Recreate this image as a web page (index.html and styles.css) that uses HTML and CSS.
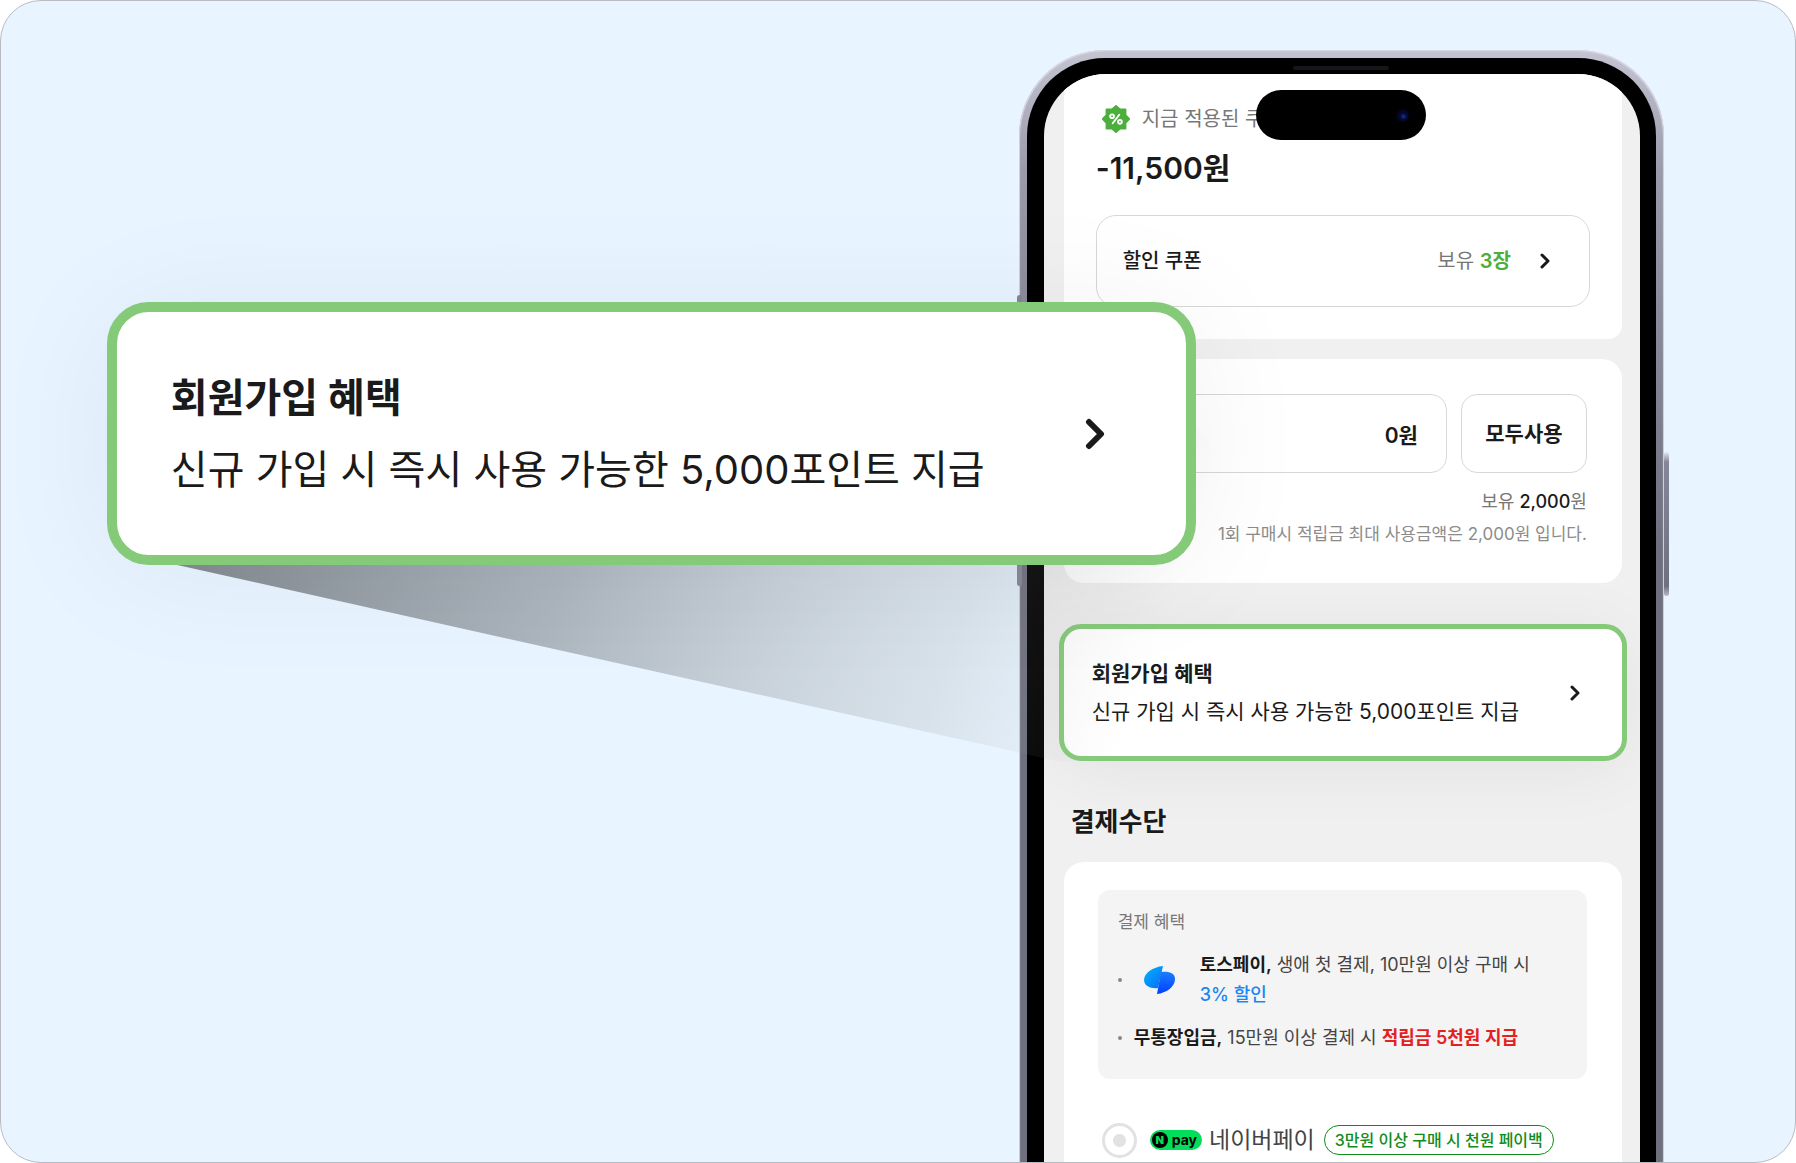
FILE: index.html
```html
<!DOCTYPE html>
<html lang="ko">
  <head>
    <meta charset="UTF-8" />
    <meta name="viewport" content="width=device-width, initial-scale=1.0" />
    <title>회원가입 혜택</title>
    <link rel="stylesheet" href="styles.css">
  </head>
  <body>
    <main class="banner">
      <div class="phone">
        <span class="side-button side-button-left"></span>
        <span class="side-button side-button-right"></span>
        <div class="bezel">
          <span class="speaker"></span>
          <div class="island"><span class="camera"></span></div>
          <div class="screen">
            <section class="card card-coupon">
              <div class="applied">
                <svg class="badge" viewBox="0 0 32 32" aria-hidden="true">
                  <path fill="#4caf3c" stroke="#4caf3c" stroke-width="2" stroke-linejoin="round" d="M16 2l4.200 3.900h5.900v5.900L30 16l-3.900 4.200v5.900h-5.900L16 30l-4.200-3.900H5.900v-5.900L2 16l3.900-4.200V5.900h5.900z" />
                  <g fill="none" stroke="#fff" stroke-width="2" stroke-linecap="round">
                    <path d="M19.500 11.500l-7 9" />
                    <circle cx="11.800" cy="13" r="2" />
                    <circle cx="20.200" cy="19" r="2" />
                  </g>
                </svg>
                <span>지금 적용된 쿠폰</span>
              </div>
              <strong class="amount">-11,500원</strong>
              <button type="button" class="coupon-row">
                <span>할인 쿠폰</span>
                <span class="coupon-count">보유 <b>3장</b></span>
                <svg class="chevron" viewBox="0 0 10 16" aria-hidden="true"><path d="M2 2l6 6-6 6" /></svg>
              </button>
            </section>

            <section class="card card-points">
              <div class="points-row">
                <input type="text" class="points-input" value="0원" aria-label="적립금" />
                <button type="button" class="use-all">모두사용</button>
              </div>
              <p class="points-held">보유 <b>2,000</b>원</p>
              <p class="points-note">1회 구매시 적립금 최대 사용금액은 2,000원 입니다.</p>
            </section>

            <a href="#" class="join">
              <span class="join-text"><b>회원가입 혜택</b><span>신규 가입 시 즉시 사용 가능한 5,000포인트 지급</span></span>
              <svg class="chevron" viewBox="0 0 10 16" aria-hidden="true"><path d="M2 2l6 6-6 6" /></svg>
            </a>

            <h2 class="pay-title">결제수단</h2>
            <section class="card card-pay">
              <div class="benefits">
                <h3>결제 혜택</h3>
                <ul>
                  <li>
                    <svg class="toss" viewBox="0 0 32 28" aria-hidden="true">
                      <defs>
                        <linearGradient id="tossLeft" x1="0" y1="0" x2="1" y2="1">
                          <stop offset="0" stop-color="#00b4ff" />
                          <stop offset="1" stop-color="#0a6cf5" />
                        </linearGradient>
                        <linearGradient id="tossRight" x1="0" y1="0" x2="0" y2="1">
                          <stop offset="0" stop-color="#1c7dff" />
                          <stop offset="1" stop-color="#0040ff" />
                        </linearGradient>
                      </defs>
                      <path fill="url(#tossLeft)" d="M19 0C9 1 0 7 0 14c0 6 7 9 14 8z" />
                      <path fill="url(#tossRight)" d="M17 6c8-1 14 1 14 7 0 8-9 14-18 15z" />
                    </svg>
                    <span class="benefit-text"><b>토스페이,</b> 생애 첫 결제, 10만원 이상 구매 시 <em class="blue">3% 할인</em></span>
                  </li>
                  <li><span class="benefit-text"><b>무통장입금,</b> 15만원 이상 결제 시 <em class="red">적립금 5천원 지급</em></span></li>
                </ul>
              </div>
              <label class="pay-option">
                <input type="radio" name="pay" />
                <span class="npay"><i>N</i>pay</span>
                <span class="pay-name">네이버페이</span>
                <span class="payback">3만원 이상 구매 시 천원 페이백</span>
              </label>
            </section>
          </div>
        </div>
      </div>

      <!-- shade between the large box and the card on the phone -->
      <svg class="beam" viewBox="0 0 1796 1163" preserveAspectRatio="none" aria-hidden="true">
        <defs>
          <linearGradient id="beamFill" gradientUnits="userSpaceOnUse" x1="176" y1="500" x2="1106" y2="807">
            <stop offset="0" stop-color="#000" stop-opacity="0.45" />
            <stop offset="0.4" stop-color="#202428" stop-opacity="0.3" />
            <stop offset="0.8" stop-color="#909090" stop-opacity="0.18" />
            <stop offset="1" stop-color="#b0b0b0" stop-opacity="0" />
          </linearGradient>
        </defs>
        <path fill="url(#beamFill)" d="M172 564L1060 762H1500L1190 420z" />
      </svg>

      <a href="#" class="callout">
        <span class="callout-text"><b>회원가입 혜택</b><span>신규 가입 시 즉시 사용 가능한 5,000포인트 지급</span></span>
        <svg class="chevron chevron-large" viewBox="0 0 10 16" aria-hidden="true"><path d="M2 2l6 6-6 6" /></svg>
      </a>
    </main>
  </body>
</html>
```
FILE: styles.css
```css
* {
  box-sizing: border-box;
}
body {
  margin: 0;
  background-color: #fff;
  color: #1a1a1a;
  font-family: Inter, "Noto Sans CJK KR", sans-serif;
  font-size: 18px;
  line-height: 30px;
}
h2,
h3,
p,
ul {
  margin: 0;
  padding: 0;
}
a {
  color: inherit;
  text-decoration: none;
}
button,
input {
  font: inherit;
  color: inherit;
}
b,
strong {
  font-weight: 600;
}
.banner {
  position: relative;
  display: flex;
  justify-content: flex-end;
  min-height: 100vh;
  padding: 49px 7.3% 0 0;
  border: 1px solid #b8bcc2;
  border-radius: 41px;
  background-color: #e8f4ff;
  overflow: hidden;
}

/* phone */
.phone {
  position: relative;
  display: flex;
  width: 38.8%;
  padding: 8px 8px 0;
  border-radius: 86px 86px 0 0;
  background: linear-gradient(#c4c4d2, #9a9aab 120px, #6f707f 500px);
  box-shadow: inset 1px 1px 1px #d8d8e2, inset -1px 1px 1px #d8d8e2;
}
.side-button {
  position: absolute;
  width: 5px;
  border-radius: 3px;
  background-color: #85869a;
}
.side-button-left {
  left: -2px;
  top: 245px;
  height: 291px;
}
.side-button-right {
  right: -5px;
  top: 402px;
  height: 144px;
  background: linear-gradient(#e6e8f2, #85869a 10px, #6f707f 134px, #b8bac6);
}
.bezel {
  position: relative;
  flex: 1;
  display: flex;
  min-width: 0;
  padding: 16px 16px 0 17px;
  border-radius: 78px 78px 0 0;
  background-color: #000;
}
.speaker {
  position: absolute;
  top: 8px;
  left: 50%;
  width: 96px;
  height: 4px;
  margin-left: -48px;
  border-radius: 2px;
  background-color: #15151a;
}
.island {
  position: absolute;
  top: 32px;
  left: 50%;
  width: 170px;
  height: 50px;
  margin-left: -85px;
  border-radius: 25px;
  background-color: #000;
}
.camera {
  position: absolute;
  top: 18px;
  right: 17px;
  width: 14px;
  height: 14px;
  border-radius: 50%;
  background: radial-gradient(circle at 60% 60%, #103a9a, #060a3c 25%, #000 70%);
}
.screen {
  flex: 1;
  display: flex;
  flex-direction: column;
  min-width: 0;
  padding: 0 18px 0 20px;
  border-radius: 62px 62px 0 0;
  background-color: #f0f0f0;
  overflow: hidden;
}
.card {
  padding: 0 35px 0 34px;
  border-radius: 20px;
  background-color: #fff;
}
.chevron {
  flex: none;
  width: 10px;
  height: 16px;
  fill: none;
  stroke: #1a1a1a;
  stroke-width: 3;
  stroke-linecap: round;
  stroke-linejoin: round;
}

/* coupon */
.card-coupon {
  padding: 30px 32px 32px;
  border-radius: 0 0 14px 14px;
}
.applied {
  display: flex;
  align-items: center;
  gap: 10px;
  padding-left: 4px;
  color: #777;
  font-size: 20px;
}
.badge {
  width: 32px;
  height: 30px;
}
.amount {
  display: block;
  margin: 12px 0 25px;
  font-size: 30px;
  line-height: 44px;
}
.coupon-row {
  display: flex;
  align-items: center;
  width: 100%;
  height: 92px;
  padding: 0 39px 0 26px;
  border: 1px solid #d8d8d8;
  border-radius: 20px;
  background-color: #fff;
  font-size: 20px;
  font-weight: 500;
}
.coupon-count {
  margin: 0 29px 0 auto;
  color: #777;
  font-weight: 400;
}
.coupon-count b {
  color: #4caf3c;
}

/* points */
.card-points {
  margin: 20px 0 41px;
  padding-top: 35px;
  padding-bottom: 33px;
  text-align: right;
  line-height: 32px;
}
.points-row {
  display: flex;
  gap: 14px;
  margin-bottom: 13px;
}
.points-input,
.use-all {
  height: 79px;
  border: 1px solid #d8d8d8;
  border-radius: 16px;
  background-color: #fff;
  font-size: 21px;
  font-weight: 600;
}
.points-input {
  flex: 1;
  min-width: 0;
  padding: 0 28px;
  text-align: right;
}
.use-all {
  width: 126px;
  padding: 0;
}
.points-held {
  color: #777;
}
.points-held b {
  color: #1a1a1a;
  font-weight: 500;
}
.points-note {
  color: #8c8c8c;
  font-size: 17px;
  white-space: nowrap;
}

/* join benefit */
.join {
  display: flex;
  align-items: center;
  justify-content: space-between;
  margin: 0 -5px;
  padding: 26px 42px 25px 28px;
  border: 5px solid #84ca78;
  border-radius: 22px;
  background-color: #fff;
  box-shadow: 0 8px 70px rgba(0, 10, 10, 0.06);
  font-size: 21px;
  line-height: 38px;
}
.join-text,
.callout-text {
  display: flex;
  flex-direction: column;
  white-space: nowrap;
}

/* payment */
.pay-title {
  margin: 41px 0 20px;
  padding-left: 7px;
  font-size: 26px;
  font-weight: 600;
  line-height: 40px;
}
.card-pay {
  flex: 1;
  padding-top: 28px;
  padding-bottom: 3px;
  border-radius: 20px 20px 0 0;
}
.benefits {
  padding: 17px 20px 26px;
  border-radius: 12px;
  background-color: #f4f4f4;
  color: #444;
}
.benefits h3 {
  color: #777;
  font-size: 17px;
  font-weight: 400;
}
.benefits ul {
  list-style: none;
}
.benefits li {
  display: flex;
  align-items: center;
  margin-top: 13px;
}
.benefits li::before {
  content: "";
  flex: none;
  width: 4px;
  height: 4px;
  margin-right: 12px;
  border-radius: 50%;
  background-color: #888;
}
.benefits b {
  color: #1a1a1a;
}
.benefits em {
  font-style: normal;
}
.toss {
  flex: none;
  width: 32px;
  height: 28px;
  margin: 0 24px 0 10px;
}
.blue {
  display: block;
  color: #1c86f2;
  font-weight: 500;
}
.red {
  color: #e5211f;
  font-weight: 600;
}
.pay-option {
  display: flex;
  align-items: center;
  height: 36px;
  margin: 43px 0 0 4px;
  white-space: nowrap;
}
.pay-option input {
  flex: none;
  appearance: none;
  width: 35px;
  height: 35px;
  margin: 0 13px 0 0;
  border: 3px solid #e2e2e2;
  border-radius: 50%;
  background: radial-gradient(circle, #e2e2e2 6px, #fff 7px);
}
.npay {
  display: flex;
  align-items: center;
  gap: 4px;
  height: 20px;
  padding: 0 5px 0 2px;
  border-radius: 10px;
  background-color: #00de5a;
  color: #000;
  font-size: 14px;
  font-weight: 700;
  line-height: 20px;
}
.npay i {
  width: 16px;
  height: 16px;
  border-radius: 50%;
  background-color: #000;
  color: #00de5a;
  font-size: 11px;
  font-style: normal;
  font-weight: 900;
  line-height: 16px;
  text-align: center;
}
.pay-name {
  margin: 0 9px 0 7px;
  color: #444;
  font-size: 23px;
}
.payback {
  padding: 0 10px;
  border: 1px solid #118c1c;
  border-radius: 15px;
  color: #118c1c;
  font-size: 16px;
  font-weight: 500;
  line-height: 28px;
}

/* enlarged card over the phone */
.beam {
  position: absolute;
  inset: 0;
  width: 100%;
  height: 100%;
  pointer-events: none;
}
.callout {
  position: absolute;
  top: 301px;
  left: 5.9%;
  display: flex;
  align-items: center;
  justify-content: space-between;
  width: 60.7%;
  padding: 50px 81px 49px 54px;
  border: 10px solid #84ca78;
  border-radius: 42px;
  background-color: #fff;
  box-shadow: 0 8px 130px rgba(0, 10, 40, 0.06);
  font-size: 40px;
  line-height: 72px;
}
.chevron-large {
  width: 20px;
  height: 32px;
}
```
